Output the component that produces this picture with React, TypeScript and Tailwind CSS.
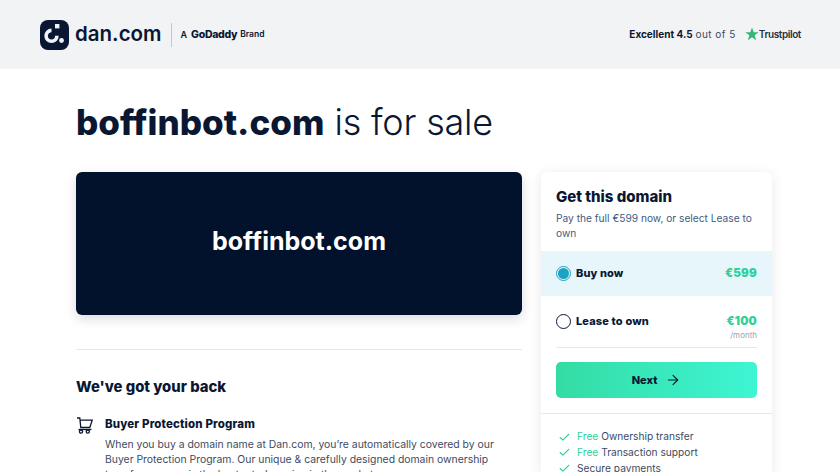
import { ArrowRight, Check } from 'lucide-react';

const perks = [
  { free: true, label: 'Ownership transfer' },
  { free: true, label: 'Transaction support' },
  { free: false, label: 'Secure payments' },
];

function DanLogo() {
  return (
    <svg width="29" height="30" viewBox="0 0 29 30" className="shrink-0">
      <rect width="29" height="30" rx="8" fill="#0a1733" />
      <path d="M11.5 10.4a5.4 5.4 0 1 0 5.4 5.4" fill="none" stroke="#f2f3f5" strokeWidth="3.6" />
      <rect x="15" y="4" width="4.4" height="4.4" fill="#f2f3f5" />
      <circle cx="21.5" cy="20.5" r="2.4" fill="#f2f3f5" />
    </svg>
  );
}

function CartIcon() {
  return (
    <svg width="18" height="18" viewBox="0 0 18 18" fill="none" stroke="#0a1733" strokeWidth="1.3" className="shrink-0">
      <path d="M1 1h2.8l1 9.5h9l2.4-7.4H3.9" />
      <path d="M2.5 12.5h13" />
      <circle cx="5" cy="14.6" r="1.6" />
      <circle cx="11.8" cy="14.6" r="1.6" />
    </svg>
  );
}

export default function App() {
  return (
    <div className="h-screen overflow-hidden bg-white text-[#0a1733] font-['Inter',sans-serif]">
      <header className="h-[69px] bg-[#f2f3f5] pl-[40px] pr-[39px] flex items-center justify-between">
        <div className="flex items-center">
          <DanLogo />
          <span className="ml-[6px] text-[20.5px] font-semibold">dan.com</span>
          <div className="ml-[9px] mr-[9px] w-px h-[24px] bg-[#c3c7cd]" />
          <span className="text-[9px] font-semibold">A</span>
          <span className="ml-[4px] text-[10.5px] font-extrabold tracking-[-0.3px]">GoDaddy</span>
          <span className="ml-[3px] text-[8.5px] font-semibold">Brand</span>
        </div>
        <div className="flex items-center text-[10px]">
          <span className="font-bold">Excellent 4.5</span>
          <span className="ml-[3px] text-[#3d4a63] tracking-[0.45px]">out of 5</span>
          <svg width="14" height="14" viewBox="0 0 24 24" className="ml-[9px] mb-[2px]">
            <path d="M12 1l3 8h8.5l-7 5.2 2.7 8.6L12 17.5l-7.2 5.3 2.7-8.6-7-5.2H9z" fill="#32b67a" />
          </svg>
          <span className="font-semibold text-[#26304a] tracking-[-0.4px]">Trustpilot</span>
        </div>
      </header>

      <main className="pl-[76px] pr-[68px]">
        <h1 className="pt-[30px] h-[103px] text-[36px] leading-[46px]">
          <span className="text-[35px] font-extrabold">boffinbot.com</span> <span className="font-light tracking-[-0.2px]">is for sale</span>
        </h1>

        <div className="flex gap-[19px] items-start">
          <div className="w-[446px] shrink-0">
            <div className="h-[143px] pb-[3px] rounded-[6px] bg-[#03122c] shadow-[0_4px_12px_rgba(10,23,51,0.15)] flex items-center justify-center text-white text-[25px] font-bold">
              boffinbot.com
            </div>
            <div className="mt-[34px] h-px bg-[#e6e8ec]" />
            <h2 className="mt-[27px] text-[14.8px] leading-[20px] font-extrabold">We've got your back</h2>
            <div className="mt-[19px] flex gap-[11px]">
              <div className="pt-[1px]">
                <CartIcon />
              </div>
              <div>
                <h3 className="text-[11.5px] leading-[16px] font-extrabold tracking-[0.15px]">Buyer Protection Program</h3>
                <p className="mt-[5px] text-[10.4px] leading-[15px] text-[#3d4a63]">
                  When you buy a domain name at Dan.com, you’re automatically covered by our Buyer Protection Program. Our unique &amp; carefully designed domain ownership transfer process is the best rated service in the market.
                </p>
              </div>
            </div>
          </div>

          <aside className="w-[231px] shrink-0 rounded-[6px] bg-white shadow-[0_2px_14px_rgba(10,23,51,0.09)]">
            <div className="px-[15px] pt-[16px] pb-[10px]">
              <h2 className="text-[15px] leading-[18px] font-extrabold">Get this domain</h2>
              <p className="mt-[5px] text-[10.2px] leading-[15px] text-[#3f5a80]">
                Pay the full €599 now, or select Lease to own
              </p>
            </div>
            <div className="h-[45px] px-[15px] bg-[#e6f6fb] flex items-center justify-between">
              <div className="flex items-center gap-[5px]">
                <span className="w-[15px] h-[15px] rounded-full border border-[#1ba3c4] flex items-center justify-center">
                  <span className="w-[11px] h-[11px] rounded-full bg-[#1ba3c4]" />
                </span>
                <span className="text-[11px] font-extrabold tracking-[0.1px]">Buy now</span>
              </div>
              <span className="text-[11.5px] font-black text-[#2fd09a] tracking-[0.2px]">€599</span>
            </div>
            <div className="mx-[15px] pt-[17px] pb-[6px] border-b border-[#e6e8ec]">
              <div className="flex items-center justify-between">
                <div className="flex items-center gap-[5px]">
                  <span className="w-[15px] h-[15px] rounded-full border-[1.5px] border-[#0a1733]" />
                  <span className="text-[11px] font-extrabold tracking-[0.15px]">Lease to own</span>
                </div>
                <span className="text-[11.5px] font-black text-[#2fd09a] tracking-[0.2px]">€100</span>
              </div>
              <div className="text-right text-[8px] leading-[11px] text-[#9aa3b2]">/month</div>
            </div>
            <div className="mx-[15px] mt-[14px] h-[36px] rounded-[5px] bg-gradient-to-r from-[#34dca4] to-[#3ef5d3] flex items-center justify-center gap-[8px] text-[11px] font-extrabold">
              Next
              <ArrowRight size={16} strokeWidth={1.6} />
            </div>
            <div className="mt-[15px] border-t border-[#e6e8ec] pt-[15px] px-[17px]">
              {perks.map((perk) => (
                <div key={perk.label} className="flex items-center gap-[6px] h-[15.6px] text-[10.2px] text-[#3d4a63]">
                  <Check size={13} strokeWidth={2} className="text-[#2fd09a]" />
                  <span>
                    {perk.free && <span className="text-[#2fd09a]">Free </span>}
                    {perk.label}
                  </span>
                </div>
              ))}
            </div>
          </aside>
        </div>
      </main>
    </div>
  );
}
